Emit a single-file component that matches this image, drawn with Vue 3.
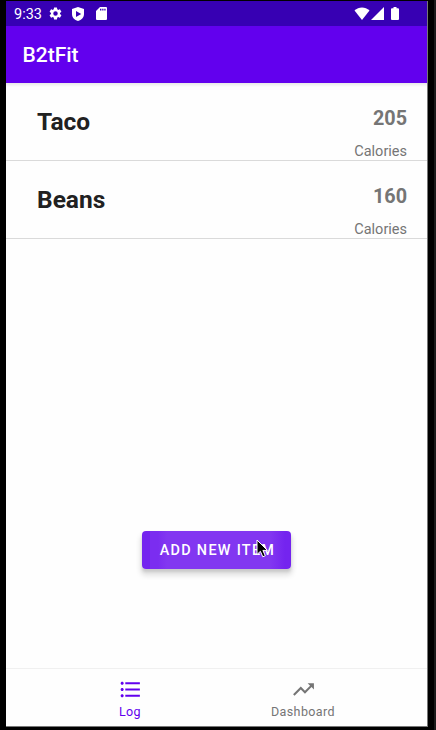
<script setup>
const foods = [
  { name: 'Taco', calories: 205 },
  { name: 'Beans', calories: 160 },
]
</script>

<template>
  <div class="device">
    <div class="screen">
      <div class="status">
        <span class="time">9:33</span>
        <svg class="gear" viewBox="0 0 24 24"><path d="M19.14 12.94c.04-.3.06-.61.06-.94 0-.32-.02-.64-.07-.94l2.03-1.58a.49.49 0 0 0 .12-.61l-1.92-3.32a.49.49 0 0 0-.59-.22l-2.39.96c-.5-.38-1.03-.7-1.62-.94l-.36-2.54a.48.48 0 0 0-.48-.41h-3.84c-.24 0-.43.17-.47.41l-.36 2.54c-.59.24-1.13.57-1.62.94l-2.39-.96a.48.48 0 0 0-.59.22L2.74 8.87c-.12.21-.08.47.12.61l2.03 1.58c-.05.3-.09.63-.09.94s.02.64.07.94l-2.03 1.58a.49.49 0 0 0-.12.61l1.92 3.32c.12.22.37.29.59.22l2.39-.96c.5.38 1.03.7 1.62.94l.36 2.54c.05.24.24.41.48.41h3.84c.24 0 .44-.17.47-.41l.36-2.54c.59-.24 1.13-.56 1.62-.94l2.39.96c.22.08.47 0 .59-.22l1.92-3.32a.48.48 0 0 0-.12-.61zM12 15.6A3.6 3.6 0 1 1 12 8.4a3.6 3.6 0 0 1 0 7.2z" /></svg>
        <svg class="shield" viewBox="0 0 12 14"><path fill-rule="evenodd" d="M6 0l6 2v5c0 3.400-2.500 6-6 7-3.500-1-6-3.600-6-7V2zM4 3.900v6.200L9.200 7z" /></svg>
        <svg class="sd" viewBox="0 0 11 13"><path fill-rule="evenodd" d="M4 0h6a1 1 0 0 1 1 1v11a1 1 0 0 1-1 1H1a1 1 0 0 1-1-1V4zM4 1.800v1.800h1.400V1.800zM6.200 1.800v1.800h1.300V1.800zM8.300 1.800v1.800h1.300V1.800z" /></svg>
        <svg class="wifi" viewBox="0 0 16 13"><path d="M.5 3.600C4.800-.7 11.200-.7 15.500 3.600L8 13z" /></svg>
        <svg class="signal" viewBox="0 0 13 13"><path d="M13 0v13H0z" /></svg>
        <svg class="battery" viewBox="0 0 8 13"><path d="M2.500 0h3v1.300H7a1 1 0 0 1 1 1V12a1 1 0 0 1-1 1H1a1 1 0 0 1-1-1V2.300a1 1 0 0 1 1-1h1.500z" /></svg>
      </div>
      <header class="appbar">B2tFit</header>
      <main class="content">
        <div v-for="food in foods" :key="food.name" class="row">
          <span class="name">{{ food.name }}</span>
          <div class="amount">
            <span class="value">{{ food.calories }}</span>
            <span class="unit">Calories</span>
          </div>
        </div>
        <button class="add">
          ADD NEW ITEM
          <svg class="cursor" viewBox="0 0 12 19"><path d="M1 1v14.500l3.400-3.200 2.400 5.500 2.500-1.100-2.400-5.300h4.500z" /></svg>
        </button>
      </main>
      <nav class="nav">
        <div class="tab active">
          <svg viewBox="0 0 24 24"><path d="M4 10.500c-.83 0-1.500.67-1.500 1.500s.67 1.500 1.500 1.500 1.500-.67 1.500-1.500-.67-1.500-1.500-1.500zm0-6c-.83 0-1.500.67-1.500 1.500S3.170 7.500 4 7.500 5.500 6.830 5.500 6 4.830 4.500 4 4.500zm0 12c-.83 0-1.500.68-1.500 1.500s.68 1.500 1.500 1.500 1.500-.68 1.500-1.500-.67-1.500-1.500-1.500zM7 19h14v-2H7v2zm0-6h14v-2H7v2zm0-8v2h14V5H7z" /></svg>
          <span>Log</span>
        </div>
        <div class="tab">
          <svg viewBox="0 0 24 24"><path d="M16 6l2.290 2.290-4.880 4.880-4-4L2 16.590 3.410 18l6-6 4 4 6.300-6.290L22 12V6z" /></svg>
          <span>Dashboard</span>
        </div>
      </nav>
    </div>
  </div>
</template>

<style>
body {
  background: #000;
}
</style>

<style scoped>
.device {
  box-sizing: border-box;
  width: 436px;
  height: 730px;
  padding: 1px 8px 3px 6px;
  background: linear-gradient(90deg, #000 434px, #1b1b1b 434px);
  font-family: Roboto, sans-serif;
  overflow: hidden;
}
.screen {
  box-sizing: border-box;
  height: 726px;
  display: flex;
  flex-direction: column;
  background: #fefefe;
  border-right: 1px solid #777;
  border-bottom: 1px solid #777;
}
.status {
  height: 25px;
  flex: none;
  display: flex;
  align-items: center;
  padding-left: 8px;
  box-sizing: border-box;
  background: #3700b3;
  color: #fff;
}
.status svg {
  flex: none;
  fill: #fff;
}
.time {
  width: 34px;
  padding-top: 2px;
  font-size: 14.5px;
  line-height: 23px;
}
.gear {
  width: 15px;
  height: 15px;
}
.shield {
  width: 12px;
  height: 14px;
  margin-left: 9px;
}
.sd {
  width: 11px;
  height: 13px;
  margin-left: 11.500px;
}
.wifi {
  width: 16px;
  height: 13px;
  margin-left: 247.500px;
}
.signal {
  width: 13px;
  height: 13px;
  margin-left: 1px;
}
.battery {
  width: 8px;
  height: 13px;
  margin-left: 7px;
}
.appbar {
  height: 57px;
  flex: none;
  padding-left: 16.500px;
  background: #6200ee;
  color: #fff;
  font-size: 21px;
  font-weight: 500;
  line-height: 59px;
}
.content {
  flex: 1;
  display: flex;
  flex-direction: column;
  box-shadow: inset 0 4px 3px -2px #e8e8e8;
}
.row {
  box-sizing: border-box;
  height: 78px;
  flex: none;
  display: flex;
  justify-content: space-between;
  padding: 0 20px 0 31px;
  border-bottom: 1px solid #dadada;
}
.name {
  color: #212121;
  font-size: 24.500px;
  font-weight: 700;
  line-height: 77px;
}
.amount {
  display: flex;
  flex-direction: column;
  align-items: flex-end;
  color: #757575;
}
.value {
  padding-top: 24px;
  font-size: 19.800px;
  font-weight: 700;
  line-height: 24px;
}
.unit {
  padding-top: 11px;
  font-size: 14.500px;
  line-height: 20px;
}
.add {
  position: relative;
  align-self: center;
  width: 149px;
  height: 38px;
  margin: 292px 0 0;
  padding: 1px 0 0 2px;
  border: 0;
  border-radius: 4px;
  background: linear-gradient(90deg, #7424ef 0, #7424ef 8px, #7b2df0 8px, #7b2df0 16px, #8237f1 25px, #8237f1 128px, #7b2df0 136px, #7424ef 143px);
  box-shadow: 0 3px 3px rgba(0, 0, 0, 0.12), 0 5px 5px 2px rgba(0, 0, 0, 0.1);
  color: #fff;
  font-family: inherit;
  font-size: 14.400px;
  font-weight: 500;
  letter-spacing: 1.300px;
  white-space: nowrap;
}
.cursor {
  position: absolute;
  left: 114px;
  top: 8px;
  width: 12px;
  height: 19px;
  fill: #000;
  stroke: #fff;
  stroke-width: 1;
}
.nav {
  box-sizing: border-box;
  height: 58px;
  flex: none;
  display: flex;
  justify-content: center;
  border-top: 1px solid #f0f0f0;
}
.tab {
  width: 173px;
  display: flex;
  flex-direction: column;
  align-items: center;
  padding-top: 8px;
  color: #757575;
  font-size: 12.500px;
  line-height: 16px;
  letter-spacing: 0.400px;
}
.tab svg {
  width: 25px;
  height: 25px;
  margin-bottom: 2px;
  fill: currentColor;
}
.active {
  color: #6200ee;
}
</style>
